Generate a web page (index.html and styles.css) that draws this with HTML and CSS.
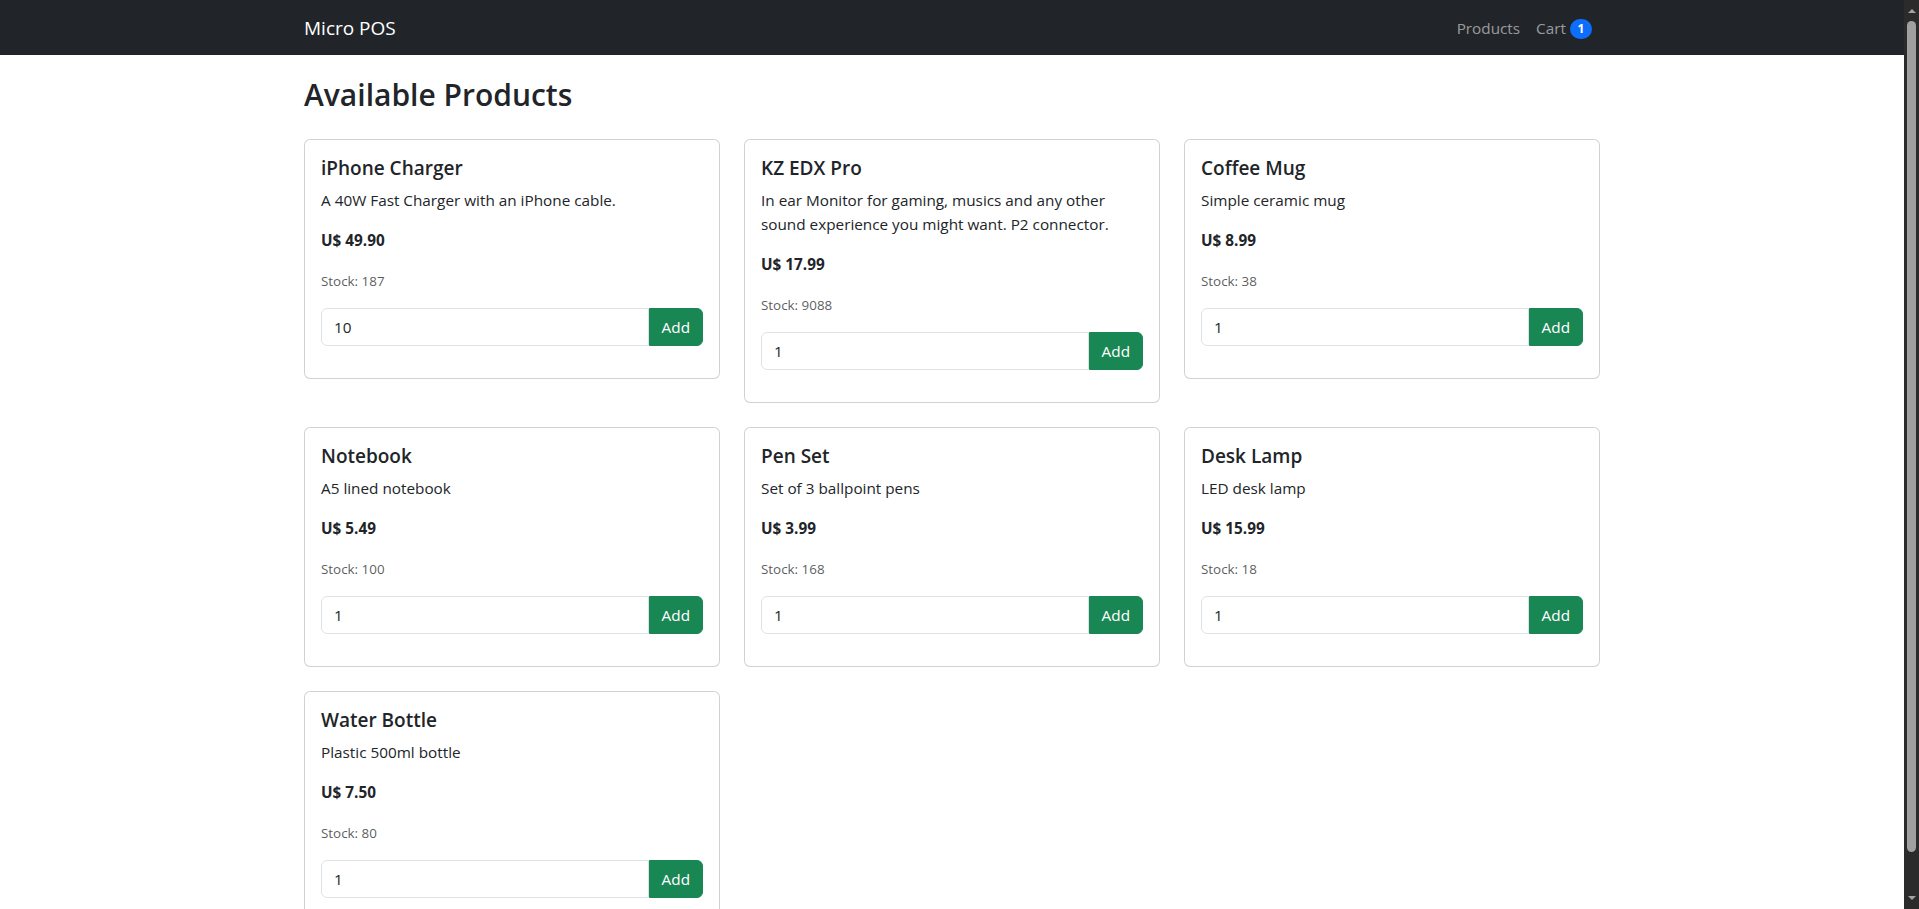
FILE: index.html
```html
<!DOCTYPE html>
<html lang="en">
<head>
<meta charset="utf-8">
<title>Micro POS</title>
<link rel="stylesheet" href="styles.css">
</head>
<body>
<nav class="navbar">
  <div class="container nav-inner">
    <a class="brand" href="#">Micro POS</a>
    <ul class="nav-links">
      <li><a class="nav-link" href="#">Products</a></li>
      <li><a class="nav-link" href="#">Cart <span class="badge">1</span></a></li>
    </ul>
  </div>
</nav>
<main class="container page">
  <h2 class="page-title">Available Products</h2>
  <div class="product-grid">
    <div class="card"><div class="card-body">
      <h5 class="card-title">iPhone Charger</h5>
      <p class="card-text">A 40W Fast Charger with an iPhone cable.</p>
      <p class="card-text"><strong>U$ 49.90</strong></p>
      <p class="card-text"><small class="muted">Stock: 187</small></p>
      <div class="input-group"><input class="qty" type="number" value="10" min="1"><button class="btn-add">Add</button></div>
    </div></div>
    <div class="card"><div class="card-body">
      <h5 class="card-title">KZ EDX Pro</h5>
      <p class="card-text">In ear Monitor for gaming, musics and any other sound experience you might want. P2 connector.</p>
      <p class="card-text"><strong>U$ 17.99</strong></p>
      <p class="card-text"><small class="muted">Stock: 9088</small></p>
      <div class="input-group"><input class="qty" type="number" value="1" min="1"><button class="btn-add">Add</button></div>
    </div></div>
    <div class="card"><div class="card-body">
      <h5 class="card-title">Coffee Mug</h5>
      <p class="card-text">Simple ceramic mug</p>
      <p class="card-text"><strong>U$ 8.99</strong></p>
      <p class="card-text"><small class="muted">Stock: 38</small></p>
      <div class="input-group"><input class="qty" type="number" value="1" min="1"><button class="btn-add">Add</button></div>
    </div></div>
    <div class="card"><div class="card-body">
      <h5 class="card-title">Notebook</h5>
      <p class="card-text">A5 lined notebook</p>
      <p class="card-text"><strong>U$ 5.49</strong></p>
      <p class="card-text"><small class="muted">Stock: 100</small></p>
      <div class="input-group"><input class="qty" type="number" value="1" min="1"><button class="btn-add">Add</button></div>
    </div></div>
    <div class="card"><div class="card-body">
      <h5 class="card-title">Pen Set</h5>
      <p class="card-text">Set of 3 ballpoint pens</p>
      <p class="card-text"><strong>U$ 3.99</strong></p>
      <p class="card-text"><small class="muted">Stock: 168</small></p>
      <div class="input-group"><input class="qty" type="number" value="1" min="1"><button class="btn-add">Add</button></div>
    </div></div>
    <div class="card"><div class="card-body">
      <h5 class="card-title">Desk Lamp</h5>
      <p class="card-text">LED desk lamp</p>
      <p class="card-text"><strong>U$ 15.99</strong></p>
      <p class="card-text"><small class="muted">Stock: 18</small></p>
      <div class="input-group"><input class="qty" type="number" value="1" min="1"><button class="btn-add">Add</button></div>
    </div></div>
    <div class="card"><div class="card-body">
      <h5 class="card-title">Water Bottle</h5>
      <p class="card-text">Plastic 500ml bottle</p>
      <p class="card-text"><strong>U$ 7.50</strong></p>
      <p class="card-text"><small class="muted">Stock: 80</small></p>
      <div class="input-group"><input class="qty" type="number" value="1" min="1"><button class="btn-add">Add</button></div>
    </div></div>
  </div>
</main>
<div class="scrollbar" aria-hidden="true">
  <span class="sb-arrow sb-up"></span>
  <span class="sb-thumb"></span>
  <span class="sb-gap"></span>
  <span class="sb-arrow sb-down"></span>
</div>
</body>
</html>
```
FILE: styles.css
```css
* {
  box-sizing: border-box;
}
body {
  margin: 0;
  padding-right: 15px;
  font-family: "Open Sans", "Noto Sans", sans-serif;
  font-size: 15.3px;
  line-height: 24px;
  color: #212529;
  background: #fff;
}
.container {
  width: 100%;
  max-width: 1320px;
  margin: 0 auto;
  padding: 0 12px;
}

/* imitation of the window scrollbar (overlay) */
.scrollbar {
  position: fixed;
  top: 0;
  right: 0;
  width: 15px;
  height: 100%;
  background: #2b2b2b;
  display: flex;
  flex-direction: column;
  align-items: center;
}
.sb-arrow {
  width: 0;
  border-left: 4px solid transparent;
  border-right: 4px solid transparent;
}
.sb-up {
  flex: 0 0 4px;
  height: 4px;
  margin-top: 5px;
  border-bottom: 4px solid #a3a3a3;
  box-sizing: content-box;
}
.sb-thumb {
  flex: 1 1 auto;
  width: 9px;
  margin-top: 8px;
  border-radius: 5px;
  background: #a0a0a0;
}
.sb-gap {
  flex: 0 0 44px;
}
.sb-down {
  flex: 0 0 4px;
  height: 4px;
  margin-bottom: 5px;
  border-top: 4px solid #a3a3a3;
  box-sizing: content-box;
}

/* navbar */
.navbar {
  background: #212529;
  height: 55px;
}
.nav-inner {
  height: 100%;
  display: flex;
  align-items: center;
  justify-content: space-between;
}
.brand {
  color: #fff;
  font-size: 19px;
  line-height: 30px;
  text-decoration: none;
}
.nav-links {
  display: flex;
  list-style: none;
  margin: 0;
  padding: 0;
}
.nav-link {
  display: block;
  padding: 8px;
  color: rgba(255, 255, 255, 0.55);
  text-decoration: none;
  line-height: 24px;
}
.badge {
  display: inline-block;
  padding: 4.2px 7.6px;
  font-size: 12px;
  font-weight: 700;
  line-height: 1;
  color: #fff;
  background: #0d6efd;
  border-radius: 50rem;
  text-align: center;
  vertical-align: 0.5px;
}

/* page */
.page {
  padding-bottom: 22px;
}
.page-title {
  margin: 21px 0 25px;
  font-size: 30px;
  font-weight: 600;
  line-height: 38.4px;
}
.product-grid {
  display: grid;
  grid-template-columns: repeat(3, 1fr);
  gap: 24px;
  align-items: start;
}
.card {
  border: 1px solid rgba(0, 0, 0, 0.175);
  border-radius: 6px;
  background: #fff;
}
.card-body {
  padding: 16px;
}
.card-title {
  margin: 0 0 8px;
  font-size: 19px;
  font-weight: 600;
  line-height: 24px;
}
.card-text {
  margin: 0 0 16px;
}
.card-text strong {
  font-weight: 700;
}
.muted {
  font-size: 13.4px;
  line-height: 20px;
  color: rgba(33, 37, 41, 0.75);
}
.input-group {
  display: flex;
  margin-bottom: 16px;
}
.qty {
  flex: 1 1 auto;
  min-width: 0;
  height: 38px;
  padding: 6px 12px;
  font-family: inherit;
  font-size: 15.3px;
  line-height: 24px;
  color: #212529;
  background: #fff;
  border: 1px solid #dee2e6;
  border-radius: 6px 0 0 6px;
  outline: none;
}
.btn-add {
  height: 38px;
  padding: 6px 12px;
  font-family: inherit;
  font-size: 15.3px;
  line-height: 24px;
  color: #fff;
  background: #198754;
  border: 1px solid #198754;
  border-radius: 0 6px 6px 0;
  cursor: pointer;
}
```
